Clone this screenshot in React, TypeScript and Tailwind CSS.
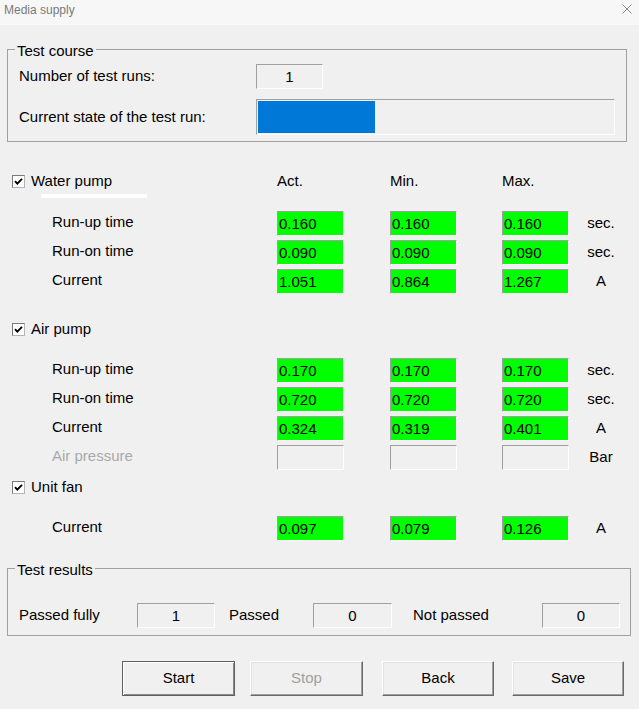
import React from "react";

const sunken =
  "border border-t-[#a0a0a0] border-l-[#a0a0a0] border-b-white border-r-white";

type Row = {
  label: string;
  values?: [string, string, string];
  unit: string;
  disabled?: boolean;
};

const waterRows: Row[] = [
  { label: "Run-up time", values: ["0.160", "0.160", "0.160"], unit: "sec." },
  { label: "Run-on time", values: ["0.090", "0.090", "0.090"], unit: "sec." },
  { label: "Current", values: ["1.051", "0.864", "1.267"], unit: "A" },
];

const airRows: Row[] = [
  { label: "Run-up time", values: ["0.170", "0.170", "0.170"], unit: "sec." },
  { label: "Run-on time", values: ["0.720", "0.720", "0.720"], unit: "sec." },
  { label: "Current", values: ["0.324", "0.319", "0.401"], unit: "A" },
  { label: "Air pressure", unit: "Bar", disabled: true },
];

const fanRows: Row[] = [
  { label: "Current", values: ["0.097", "0.079", "0.126"], unit: "A" },
];

function Checkbox() {
  return (
    <div className="w-[13px] h-[13px] bg-white border border-t-[#7a7a7a] border-l-[#7a7a7a] border-b-[#b4b4b4] border-r-[#b4b4b4] flex items-center justify-center">
      <svg width="11" height="11" viewBox="0 0 11 11">
        <path d="M2 5.2 L4.3 7.6 L9 2.8" fill="none" stroke="#000" strokeWidth="1.9" />
      </svg>
    </div>
  );
}

function Field({ value, className = "" }: { value?: string; className?: string }) {
  return (
    <div
      className={`${sunken} w-[67px] h-[25px] pl-[1px] leading-[23px] ${
        value !== undefined ? "bg-[#00ff00]" : ""
      } ${className}`}
    >
      {value}
    </div>
  );
}

function Header({ label, cols }: { label: string; cols?: boolean }) {
  return (
    <div className="flex items-center h-[24px]">
      <div className="flex items-center w-[277px] pl-[12px]">
        <Checkbox />
        <span className="ml-[6px]">{label}</span>
      </div>
      {cols && (
        <>
          <span className="w-[113px]">Act.</span>
          <span className="w-[112px]">Min.</span>
          <span>Max.</span>
        </>
      )}
    </div>
  );
}

function DataRows({ rows }: { rows: Row[] }) {
  return (
    <div className="flex flex-col gap-[4px]">
      {rows.map((r, i) => (
        <div key={i} className="flex items-center h-[25px]">
          <span
            className={`w-[277px] pl-[52px] pb-[3px] ${r.disabled ? "text-[#a8a8a8]" : ""}`}
          >
            {r.label}
          </span>
          <Field value={r.values?.[0]} />
          <Field value={r.values?.[1]} className="ml-[46px]" />
          <Field value={r.values?.[2]} className="ml-[45px]" />
          <span className="w-[64px] text-center">{r.unit}</span>
        </div>
      ))}
    </div>
  );
}

function Button({
  label,
  kind,
  className = "",
}: {
  label: string;
  kind: "default" | "normal" | "disabled";
  className?: string;
}) {
  const look =
    kind === "default"
      ? "border border-[#5f5f5f] shadow-[inset_1px_1px_0_#fff,inset_-1px_-1px_0_#8a8a8a]"
      : "border border-t-white border-l-white border-b-[#696969] border-r-[#696969] shadow-[inset_-1px_-1px_0_#a0a0a0,inset_1px_1px_0_#e3e3e3]";
  return (
    <button
      className={`h-[35px] bg-[#f0f0f0] flex items-center justify-center ${look} ${
        kind === "disabled" ? "text-[#a0a0a0]" : "text-black"
      } ${className}`}
    >
      {label}
    </button>
  );
}

export default function App() {
  return (
    <div className="w-[639px] h-[709px] overflow-hidden bg-[#f0f0f0] text-[15px] text-black font-['Liberation_Sans',Arial,sans-serif]">
      {/* title bar */}
      <div className="h-[25px] bg-[#f7f7f7] flex justify-between items-start pt-[3px] pl-[4px] pr-[7px]">
        <span className="text-[12px] leading-[15px] text-[#7a7a7a]">Media supply</span>
        <svg className="mt-[1px]" width="10" height="10" viewBox="0 0 10 10">
          <path d="M0.5 0.5 L9.5 9.5 M9.5 0.5 L0.5 9.5" stroke="#8a8a8a" strokeWidth="1" />
        </svg>
      </div>

      {/* test course */}
      <fieldset className="mt-[15px] ml-[7px] w-[620px] border border-[#a0a0a0]">
        <legend className="ml-[7px] px-[2px] pt-[4px] leading-[14px]">Test course</legend>
        <div className="pl-[11px] pt-[6px] pb-[6px]">
          <div className="flex items-center h-[25px]">
            <span className="w-[237px]">Number of test runs:</span>
            <div className={`${sunken} w-[67px] h-[25px] text-center leading-[23px]`}>1</div>
          </div>
          <div className="flex items-center h-[36px] mt-[10px]">
            <span className="w-[237px]">Current state of the test run:</span>
            <div className={`${sunken} w-[359px] h-[36px] p-[1px]`}>
              <div className="h-full w-[117px] bg-[#0078d7]" />
            </div>
          </div>
        </div>
      </fieldset>

      {/* water pump */}
      <div className="mt-[27px]">
        <Header label="Water pump" cols />
        <div className="mt-[1px] ml-[41px] w-[106px] h-[4px] bg-white" />
        <div className="mt-[13px]">
          <DataRows rows={waterRows} />
        </div>
      </div>

      {/* air pump */}
      <div className="mt-[23px]">
        <Header label="Air pump" />
        <div className="mt-[17px]">
          <DataRows rows={airRows} />
        </div>
      </div>

      {/* unit fan */}
      <div className="mt-[5px]">
        <Header label="Unit fan" />
        <div className="mt-[17px]">
          <DataRows rows={fanRows} />
        </div>
      </div>

      {/* test results */}
      <fieldset className="mt-[18px] ml-[7px] w-[624px] border border-[#a0a0a0]">
        <legend className="ml-[7px] px-[2px] pt-[4px] leading-[14px]">Test results</legend>
        <div className="pl-[11px] pt-[26px] pb-[7px] flex items-center">
          <span className="w-[118px]">Passed fully</span>
          <div className={`${sunken} w-[78px] h-[25px] text-center leading-[23px]`}>1</div>
          <span className="ml-[14px] w-[84px]">Passed</span>
          <div className={`${sunken} w-[79px] h-[25px] text-center leading-[23px]`}>0</div>
          <span className="ml-[21px] w-[129px]">Not passed</span>
          <div className={`${sunken} w-[78px] h-[25px] text-center leading-[23px]`}>0</div>
        </div>
      </fieldset>

      {/* buttons */}
      <div className="flex mt-[25px] pl-[122px]">
        <Button label="Start" kind="default" className="w-[113px]" />
        <Button label="Stop" kind="disabled" className="ml-[15px] w-[113px]" />
        <Button label="Back" kind="normal" className="ml-[19px] w-[112px]" />
        <Button label="Save" kind="normal" className="ml-[18px] w-[112px]" />
      </div>
    </div>
  );
}
